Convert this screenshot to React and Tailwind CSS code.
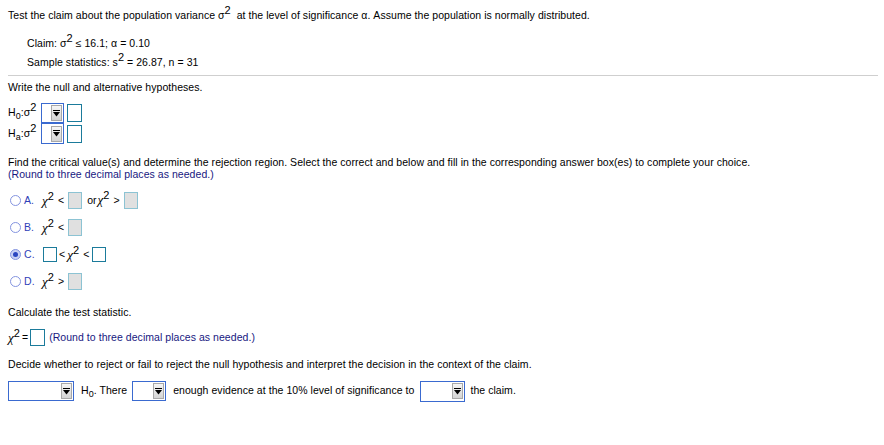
import React from "react";

const font = "font-['Liberation_Sans',Arial,sans-serif]";

function Sup({ children }) {
  return <span className="relative -top-[5px] text-[11px] leading-none">{children}</span>;
}

function Sub({ children }) {
  return <span className="relative top-[3px] text-[9px] leading-none">{children}</span>;
}

function Chi() {
  return (
    <span className="inline-flex items-baseline">
      <span className="font-['Liberation_Serif',serif] italic text-[13px] leading-none">χ</span>
      <Sup>2</Sup>
    </span>
  );
}

function Arrow() {
  return (
    <svg width="7" height="7" viewBox="0 0 7 7">
      <rect x="0" y="0" width="7" height="1" fill="#000" />
      <polygon points="0,2 7,2 3.5,6.5" fill="#000" />
    </svg>
  );
}

// select box with the little gray button on the right
function Dropdown({ className }) {
  return (
    <span className={"flex items-center justify-end border border-[#3a6ad0] bg-white shrink-0 " + className}>
      <span className="w-[11px] h-[16px] mr-[1px] flex items-center justify-center bg-gradient-to-b from-[#f6f6f6] to-[#d4d4d4] border border-[#a8a8a8]">
        <Arrow />
      </span>
    </span>
  );
}

function Box({ className = "" }) {
  return <span className={"block border border-[#1b7b9b] bg-white shrink-0 " + className} />;
}

function GrayBox() {
  return <span className="block w-[14px] h-[17px] border border-[#8cc3d3] bg-[#e0e0e0] shrink-0" />;
}

function Radio({ checked }) {
  return (
    <span
      className={
        "w-[11px] h-[11px] rounded-full border border-[#8494e0] flex items-center justify-center shrink-0 " +
        (checked ? "bg-[#c9d1f4]" : "bg-white")
      }
    >
      {checked && <span className="w-[5px] h-[5px] rounded-full bg-[#2b46c0]" />}
    </span>
  );
}

function Option({ letter, checked, children }) {
  return (
    <div className="h-[27px] flex items-center">
      <span className="ml-[2px]">
        <Radio checked={checked} />
      </span>
      <span className="ml-[3px] w-[18px] text-[#2f3fb8]">{letter}</span>
      <div className="flex items-center">{children}</div>
    </div>
  );
}

export default function App() {
  return (
    <div className={"w-[884px] h-[445px] bg-white text-black text-[10.5px] tracking-[0.05px] pl-2 pt-2 overflow-hidden " + font}>
      {/* question header */}
      <div className="h-[14px] leading-[14px] whitespace-nowrap">
        Test the claim about the population variance σ<Sup>2</Sup>&nbsp; at the level of significance α. Assume the population is normally distributed.
      </div>

      <div className="pl-[19px] mt-[14px]">
        <div className="h-[14px] leading-[14px]">
          Claim: σ<Sup>2</Sup> ≤ 16.1; α = 0.10
        </div>
        <div className="h-[14px] leading-[14px] mt-[5px]">
          Sample statistics: s<Sup>2</Sup> = 26.87, n = 31
        </div>
      </div>

      <div className="mt-[6px] mr-[6px] border-t border-[#cfcfcf]" />

      <div className="mt-[4px] h-[14px] leading-[14px]">Write the null and alternative hypotheses.</div>

      {/* hypotheses */}
      <div className="mt-[9px]">
        <div className="flex items-center h-[20px]">
          <span className="w-[33px]">
            H<Sub>0</Sub>:σ<Sup>2</Sup>
          </span>
          <Dropdown className="w-[23px] h-[20px]" />
          <Box className="ml-[3px] w-[15px] h-[18px]" />
        </div>
        <div className="flex items-center h-[21px]">
          <span className="w-[33px]">
            H<Sub>a</Sub>:σ<Sup>2</Sup>
          </span>
          <Dropdown className="w-[23px] h-[21px]" />
          <Box className="ml-[3px] w-[15px] h-[18px]" />
        </div>
      </div>

      <div className="mt-[12px] leading-[12px] whitespace-nowrap">
        Find the critical value(s) and determine the rejection region. Select the correct and below and fill in the corresponding answer box(es) to complete your choice.
      </div>
      <div className="leading-[12px] text-[#17177f]">(Round to three decimal places as needed.)</div>

      {/* choices */}
      <div className="mt-[7px]">
        <Option letter="A.">
          <Chi />
          <span className="ml-[4px] mr-[4px]">&lt;</span>
          <GrayBox />
          <span className="ml-[5px]">or</span>
          <span className="ml-[1px]">
            <Chi />
          </span>
          <span className="ml-[4px] mr-[4px]">&gt;</span>
          <GrayBox />
        </Option>
        <Option letter="B.">
          <Chi />
          <span className="ml-[4px] mr-[4px]">&lt;</span>
          <GrayBox />
        </Option>
        <Option letter="C." checked>
          <span className="ml-[1px]">
            <Box className="w-[14px] h-[15px]" />
          </span>
          <span className="ml-[2px] mr-[2px]">&lt;</span>
          <Chi />
          <span className="ml-[4px] mr-[3px]">&lt;</span>
          <Box className="w-[14px] h-[15px]" />
        </Option>
        <Option letter="D.">
          <Chi />
          <span className="ml-[4px] mr-[4px]">&gt;</span>
          <GrayBox />
        </Option>
      </div>

      <div className="mt-[10px] h-[14px] leading-[14px]">Calculate the test statistic.</div>

      <div className="mt-[10px] h-[17px] flex items-center">
        <Chi />
        <span className="ml-[2px]">=</span>
        <Box className="ml-[2px] w-[15px] h-[17px]" />
        <span className="ml-[4px] text-[#17177f]">(Round to three decimal places as needed.)</span>
      </div>

      <div className="mt-[11px] h-[14px] leading-[14px]">
        Decide whether to reject or fail to reject the null hypothesis and interpret the decision in the context of the claim.
      </div>

      <div className="mt-[10px] h-[20px] flex items-center whitespace-nowrap">
        <Dropdown className="w-[66px] h-[20px]" />
        <span className="ml-[7px]">
          H<Sub>0</Sub>. There
        </span>
        <Dropdown className="ml-[5px] w-[34px] h-[20px]" />
        <span className="ml-[7px]">enough evidence at the 10% level of significance to</span>
        <Dropdown className="ml-[6px] w-[45px] h-[21px]" />
        <span className="ml-[5px]">the claim.</span>
      </div>
    </div>
  );
}
